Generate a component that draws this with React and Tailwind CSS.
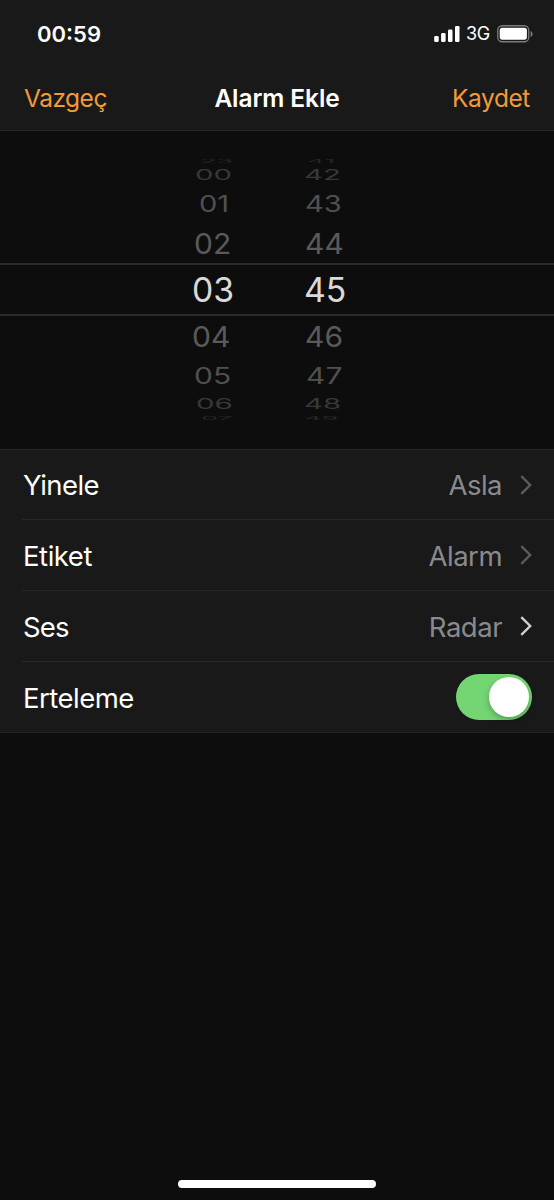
import React, { useState } from 'react';

const WHEEL_ROWS = [
  { hour: '23', minute: '41', row: 'h-[11px] text-[#262626]', digits: 'text-[30px] scale-y-[0.14] scale-x-[0.9]', hourPad: 'pl-[200px]', minutePad: 'pl-[307px]' },
  { hour: '00', minute: '42', row: 'h-[18px] text-[#383838]', digits: 'text-[30px] scale-y-[0.48] scale-x-[0.98]', hourPad: 'pl-[195px]', minutePad: 'pl-[304px]' },
  { hour: '01', minute: '43', row: 'h-[39px] text-[#505050]', digits: 'text-[30px] scale-y-[0.76] scale-x-[0.97]', hourPad: 'pl-[199px]', minutePad: 'pl-[305px]' },
  { hour: '02', minute: '44', row: 'h-[40px] text-[#5a5a5a]', digits: 'text-[30px] scale-y-[0.97]', hourPad: 'pl-[194px]', minutePad: 'pl-[305px]' },
  { hour: '03', minute: '45', row: 'h-[53px] pt-[2px] border-y-2 border-[#2b2b2b] text-[#d9d9d9]', digits: 'text-[34.4px] scale-x-[0.98]', hourPad: 'pl-[192px]', minutePad: 'pl-[304px]' },
  { hour: '04', minute: '46', row: 'h-[41px] pb-[2px] text-[#5a5a5a]', digits: 'text-[30px] scale-y-[0.97]', hourPad: 'pl-[192px]', minutePad: 'pl-[305px]' },
  { hour: '05', minute: '47', row: 'h-[38px] text-[#505050]', digits: 'text-[30px] scale-y-[0.76]', hourPad: 'pl-[194px]', minutePad: 'pl-[306px]' },
  { hour: '06', minute: '48', row: 'h-[18px] text-[#383838]', digits: 'text-[30px] scale-y-[0.48] scale-x-[0.98]', hourPad: 'pl-[196px]', minutePad: 'pl-[304px]' },
  { hour: '07', minute: '49', row: 'h-[9px] text-[#262626]', digits: 'text-[30px] scale-y-[0.16] scale-x-[0.9]', hourPad: 'pl-[201px]', minutePad: 'pl-[304px]' },
];

const OPTIONS = [
  { label: 'Yinele', value: 'Asla', row: 'h-[70px]', labelStyle: 'tracking-[-0.6px]', chevron: 'text-[#5c5c5e]' },
  { label: 'Etiket', value: 'Alarm', row: 'h-[71px]', labelStyle: 'tracking-[-0.45px]', chevron: 'text-[#5c5c5e]' },
  { label: 'Ses', value: 'Radar', row: 'h-[71px]', labelStyle: 'tracking-[-0.9px]', chevron: 'text-[#d0d0d2]' },
];

const App = () => {
  const [snooze, setSnooze] = useState(true);

  return (
    <div className="w-[554px] h-[1200px] flex flex-col overflow-hidden bg-[#0d0d0d] text-white font-['Inter',sans-serif]">
      {/* Header */}
      <header className="h-[131px] shrink-0 bg-[#191919] border-b border-[#262626]">
        <StatusBar />
        <nav className="h-[60px] grid grid-cols-3 items-center pl-6 pr-6 text-[24.5px] leading-none">
          <button className="justify-self-start text-[#f19a37] tracking-[-0.5px]">Vazgeç</button>
          <h1 className="justify-self-center font-semibold tracking-[-0.1px]">Alarm Ekle</h1>
          <button className="justify-self-end text-[#f19a37] tracking-[-0.4px]">Kaydet</button>
        </nav>
      </header>

      {/* Time wheel */}
      <section className="h-[318px] shrink-0 pt-[24px]">
        {WHEEL_ROWS.map((item) => (
          <WheelRow key={item.hour} {...item} />
        ))}
      </section>

      {/* Options */}
      <section className="shrink-0 bg-[#191919] border-y border-[#262626]">
        {OPTIONS.map((option) => (
          <div key={option.label} className="pl-[22px]">
            <div className={`flex items-center justify-between pr-[22px] border-b border-[#272727] text-[27.5px] leading-none ${option.row}`}>
              <span className={`pl-px pt-[3px] ${option.labelStyle}`}>{option.label}</span>
              <span className="flex items-center">
                <span className="pt-[3px] text-[#8a8a8e] tracking-[-0.5px]">{option.value}</span>
                <Chevron className={option.chevron} />
              </span>
            </div>
          </div>
        ))}
        <div className="h-[70px] flex items-center justify-between pl-[22px] pr-[22px] text-[27.5px] leading-none">
          <span className="pl-px pt-[3px] tracking-[-0.5px]">Erteleme</span>
          <Toggle checked={snooze} onChange={() => setSnooze(!snooze)} />
        </div>
      </section>

      {/* Home indicator */}
      <div className="mt-auto mb-[12px] mx-auto w-[198px] h-[8px] rounded-full bg-white" />
    </div>
  );
};

// ─── Sub-components ─────────────────────────────────────────────────────────

const StatusBar = () => (
  <div className="h-[68px] flex items-center justify-between pl-[37px] pr-[21px]">
    <span className="text-[22px] font-semibold leading-none">00:59</span>
    <div className="flex items-center">
      <svg width="26" height="16" viewBox="0 0 26 16" fill="currentColor">
        <rect x="0.2" y="10" width="4.500" height="6" rx="1.3" />
        <rect x="7.1" y="7" width="4.500" height="9" rx="1.3" />
        <rect x="14" y="3.5" width="4.500" height="12.5" rx="1.3" />
        <rect x="21" y="0" width="4.500" height="16" rx="1.3" />
      </svg>
      <span className="ml-[6px] text-[18px] leading-none tracking-[-0.3px]">3G</span>
      <svg className="ml-[7px]" width="36" height="18" viewBox="0 0 36 18">
        <rect x="0.75" y="0.75" width="31" height="16" rx="4.5" fill="none" stroke="#7c7c7c" strokeWidth="1.3" />
        <rect x="2.7" y="2.7" width="27.2" height="12" rx="2.6" fill="#fff" />
        <path d="M33.6 6v6c1.2-.5 2-1.700 2-3s-.8-2.500-2-3z" fill="#7c7c7c" />
      </svg>
    </div>
  </div>
);

const WheelRow = ({ hour, minute, row, digits, hourPad, minutePad }) => (
  <div className={`grid items-center content-center leading-none ${row}`}>
    <span className={`col-start-1 row-start-1 flex ${hourPad}`}>
      <span className={`origin-left ${digits}`}>{hour}</span>
    </span>
    <span className={`col-start-1 row-start-1 flex ${minutePad}`}>
      <span className={`origin-left ${digits}`}>{minute}</span>
    </span>
  </div>
);

const Chevron = ({ className }) => (
  <svg className={`ml-[18px] ${className}`} width="12" height="20" viewBox="0 0 12 20" fill="none" stroke="currentColor" strokeWidth="2.4">
    <path d="M1.300 1.200 10.200 10l-8.900 8.800" />
  </svg>
);

const Toggle = ({ checked, onChange }) => (
  <button
    role="switch"
    aria-checked={checked}
    onClick={onChange}
    className={`w-[76px] h-[46px] p-[3px] rounded-full flex items-center ${checked ? 'justify-end bg-[#74d573]' : 'justify-start bg-[#39393d]'}`}
  >
    <span className="w-10 h-10 rounded-full bg-white shadow-[0_3px_6px_rgba(0,0,0,0.25)]" />
  </button>
);

export default App;
